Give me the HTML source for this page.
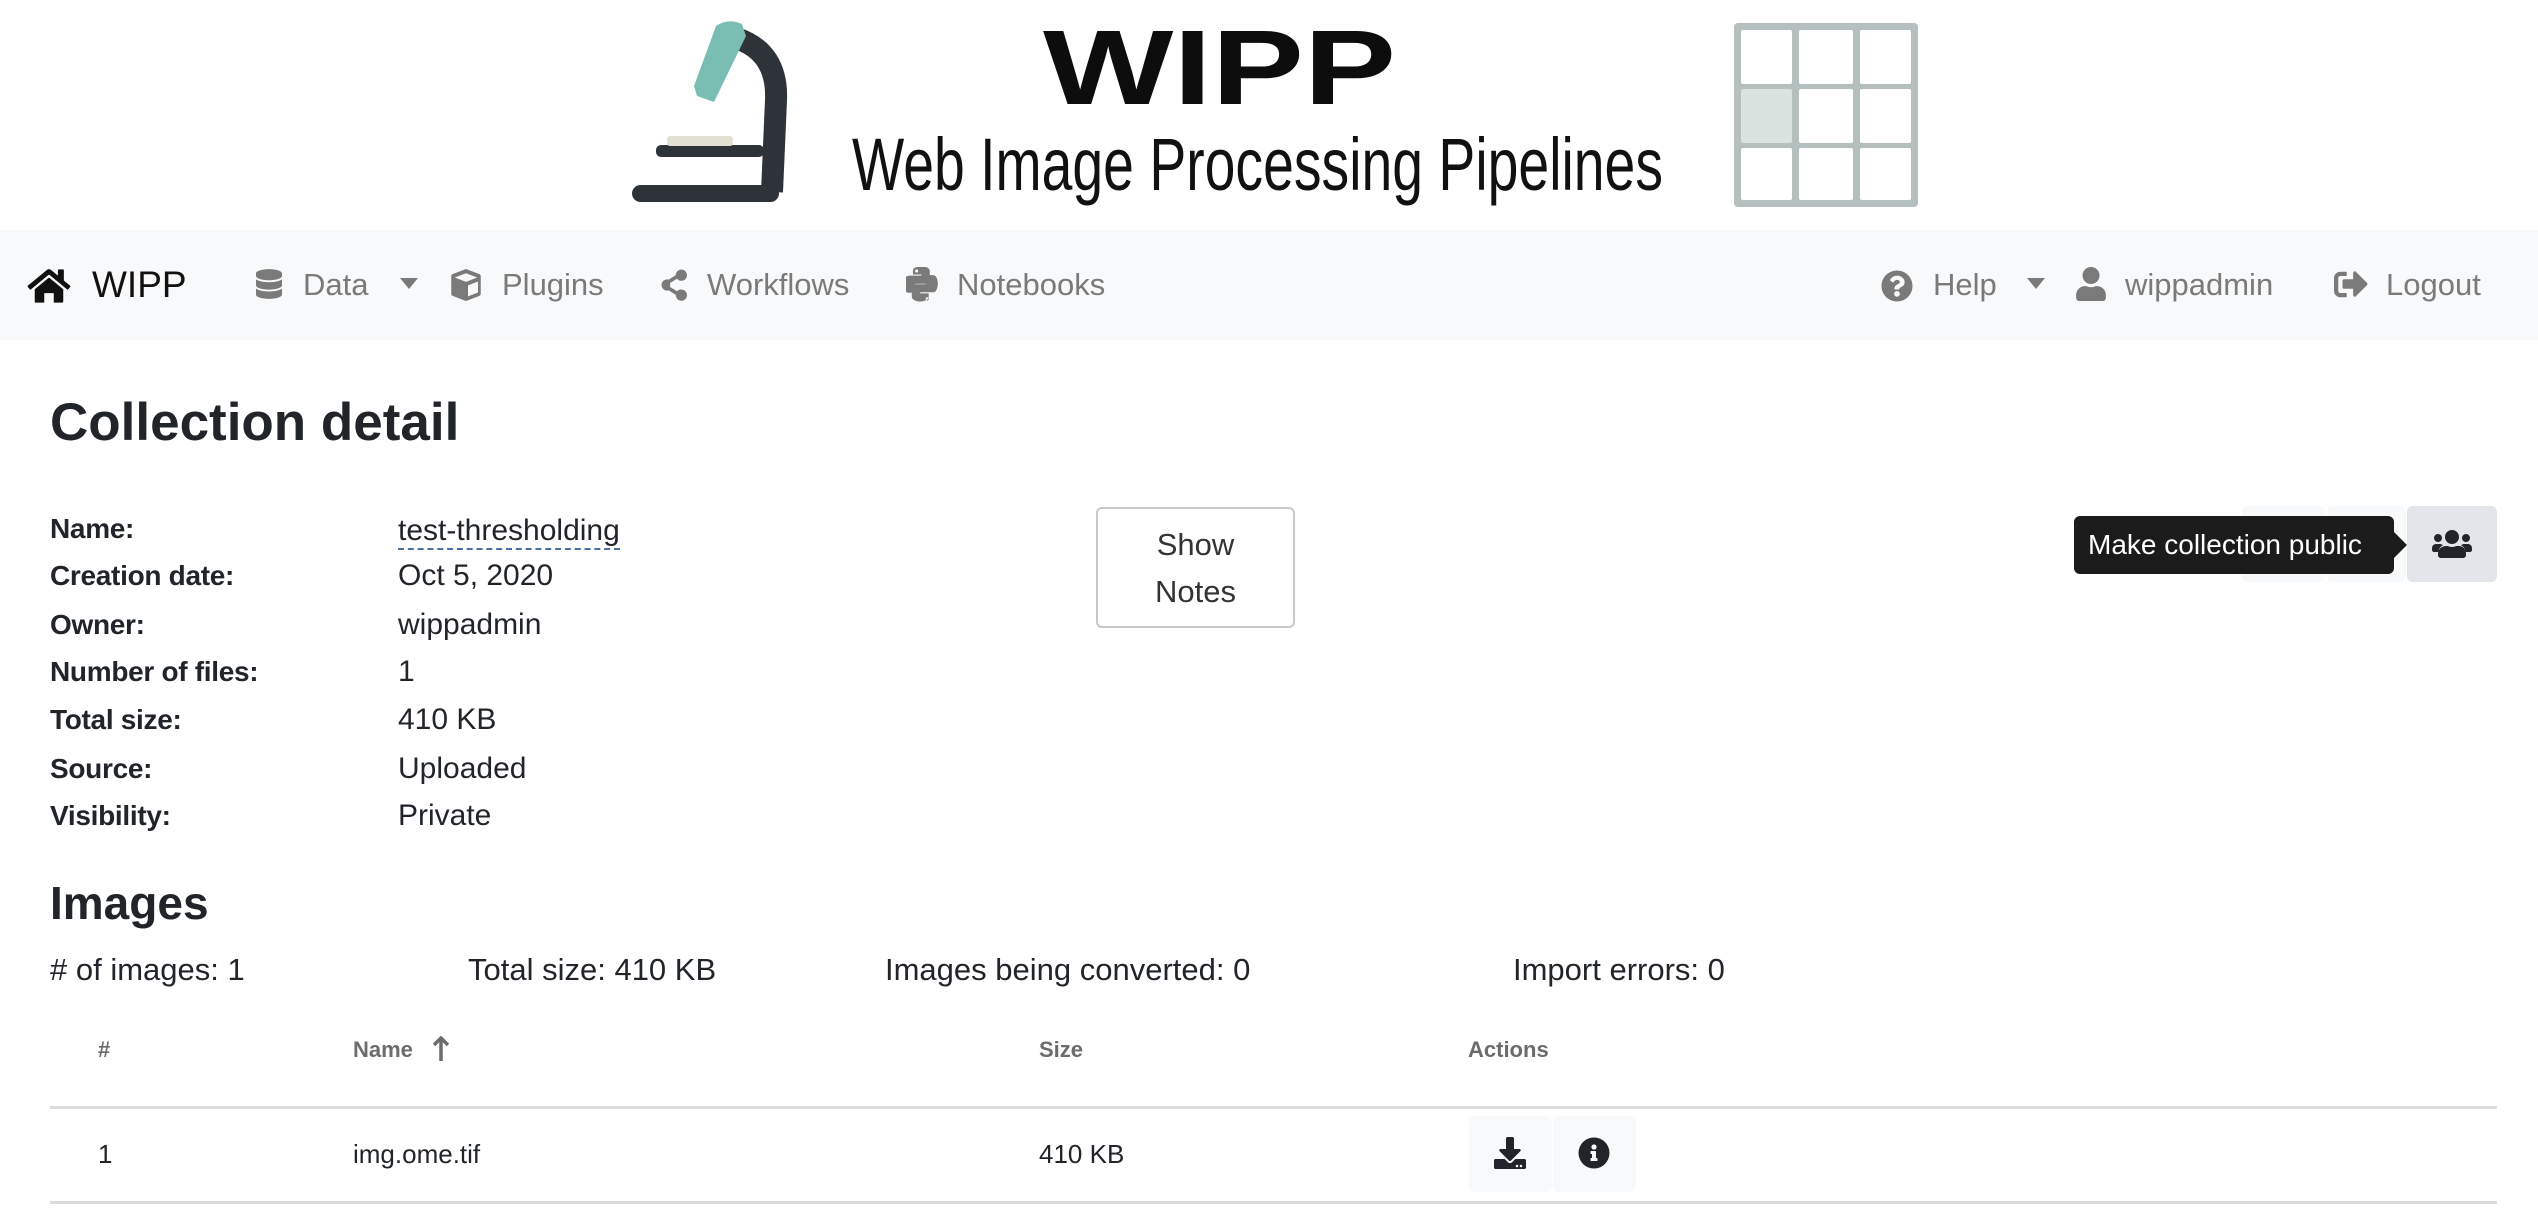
<!DOCTYPE html>
<html><head><meta charset="utf-8"><style>
*{margin:0;padding:0;box-sizing:border-box}
body{width:2538px;height:1222px;overflow:hidden;background:#fff;font-family:"Liberation Sans",Arial,sans-serif;color:#212529;position:relative}
.a{position:absolute;white-space:nowrap}
.nav{position:absolute;left:0;top:230px;width:2538px;height:110px;background:#f8f9fa}
.nl{position:absolute;top:0;line-height:110px;font-size:31px;color:#7a7a7a}
.lbl{font-weight:bold;font-size:28px;line-height:48px;left:50px;letter-spacing:-0.3px}
.val{font-size:30px;line-height:48px;left:398px}
.st{font-size:31px;line-height:40px;top:950px}
.th{font-size:22px;font-weight:bold;color:#6c6c6c;top:1030px;line-height:40px}
.td{font-size:26px;top:1134px;line-height:40px}
.btn{position:absolute;background:#f8f9fa;border-radius:6px}
</style></head><body>

<!-- Logo -->
<svg class="a" style="left:620px;top:15px" width="170" height="195" viewBox="620 15 170 195">
  <rect x="632" y="185" width="147" height="17" rx="8.5" fill="#2d3339"/>
  <path d="M736 38 Q778 52 776 100 L772 192" stroke="#2d3339" stroke-width="22" fill="none"/>
  <rect x="656" y="145" width="108" height="12" rx="5" fill="#2d3339"/>
  <rect x="667" y="136" width="66" height="10" rx="3" fill="#e2dfd3"/>
  <path d="M716 26 Q728 18 742 24 L746 36 L714 102 L697 96 L694 86 Z" fill="#79bdb3"/>
</svg>
<svg class="a" style="left:1030px;top:0" width="400" height="120" viewBox="1030 0 400 120">
  <text x="1043" y="104" font-family="Liberation Sans" font-weight="bold" font-size="118" textLength="353" lengthAdjust="spacingAndGlyphs" fill="#0d0d0d" transform="translate(0,10.4) scale(1,0.9) translate(0,0)">WIPP</text>
</svg>
<svg class="a" style="left:840px;top:120px" width="840" height="90" viewBox="840 120 840 90">
  <text x="852" y="190" font-family="Liberation Sans" font-size="74" textLength="811" lengthAdjust="spacingAndGlyphs" fill="#111">Web Image Processing Pipelines</text>
</svg>
<svg class="a" style="left:1734px;top:23px" width="184" height="184" viewBox="0 0 184 184">
  <rect x="0" y="0" width="184" height="184" rx="4" fill="#b5bfbd"/>
  <g fill="#fff">
    <rect x="7" y="7" width="51" height="54" rx="2"/><rect x="65" y="7" width="54" height="54" rx="2"/><rect x="126" y="7" width="51" height="54" rx="2"/>
    <rect x="7" y="66" width="51" height="54" rx="2" fill="#d9e2df"/><rect x="65" y="66" width="54" height="54" rx="2"/><rect x="126" y="66" width="51" height="54" rx="2"/>
    <rect x="7" y="125" width="51" height="52" rx="2"/><rect x="65" y="125" width="54" height="52" rx="2"/><rect x="126" y="125" width="51" height="52" rx="2"/>
  </g>
</svg>

<!-- Nav -->
<div class="nav">
  <svg class="a" style="left:26px;top:37px" width="46" height="38" viewBox="0 0 576 512"><path fill="#111" d="M280 148L96 300v164a16 16 0 0 0 16 16h112V352h128v128h112a16 16 0 0 0 16-16V300L296 148a12 12 0 0 0-16 0zM571 251L488 182V44a12 12 0 0 0-12-12h-56a12 12 0 0 0-12 12v72L318 42a48 48 0 0 0-61 0L4 251a12 12 0 0 0-2 17l26 31a12 12 0 0 0 17 2L280 107a12 12 0 0 1 16 0l235 194a12 12 0 0 0 17-2l26-31a12 12 0 0 0-2-17z"/></svg>
  <div class="nl" style="left:92px;color:#111;font-size:37px">WIPP</div>
  <svg class="a" style="left:256px;top:37px" width="26" height="34" viewBox="0 0 448 512"><path fill="#7a7a7a" d="M448 73v46C448 159 348 192 224 192S0 159 0 119V73C0 33 100 0 224 0s224 33 224 73zm0 103v103c0 40-100 73-224 73S0 319 0 279V176c48 33 136 49 224 49s176-16 224-49zm0 160v103c0 40-100 73-224 73S0 479 0 439V336c48 33 136 49 224 49s176-16 224-49z"/></svg>
  <div class="nl" style="left:303px">Data</div>
  <svg class="a" style="left:400px;top:48px" width="18" height="12" viewBox="0 0 18 12"><path d="M0 0h18L9 11z" fill="#7a7a7a"/></svg>
  <svg class="a" style="left:450px;top:37px" width="32" height="36" viewBox="0 0 512 512"><path fill="#7a7a7a" d="M239 6L41 82a32 32 0 0 0-21 30v288a32 32 0 0 0 21 30l198 76a48 48 0 0 0 34 0l198-76a32 32 0 0 0 21-30V112a32 32 0 0 0-21-30L273 6a48 48 0 0 0-34 0zM256 68l180 68-180 70-180-70zm32 370V262l160-62v176z"/></svg>
  <div class="nl" style="left:502px">Plugins</div>
  <svg class="a" style="left:656px;top:37px" width="32" height="36" viewBox="0 0 448 512"><path fill="#7a7a7a" d="M352 320c-23 0-43 10-57 25l-100-63a96 96 0 0 0 0-52l100-63a80 80 0 1 0-18-51l-100 63a80 80 0 1 0 0 154l100 63A80 80 0 1 0 352 320z"/></svg>
  <div class="nl" style="left:707px">Workflows</div>
  <svg class="a" style="left:906px;top:37px" width="32" height="36" viewBox="0 0 448 512"><path fill="#7a7a7a" d="M440 177c-9-35-26-61-61-61h-45v53c0 41-35 76-75 76H139c-33 0-60 28-60 61v114c0 33 28 52 60 61 38 11 76 13 120 0 30-9 60-26 60-61v-45H199v-16h181c35 0 48-24 60-61 12-39 12-76 0-121zM298 431a22 22 0 1 1 0 44 22 22 0 0 1 0-44zM155 238h120c33 0 60-28 60-61V62c0-33-28-57-60-62-41-7-85-6-120 0-51 9-60 28-60 62v45h120v15H49c-35 0-66 21-75 61-11 46-11 75 0 123 9 36 29 61 64 61h41v-55c0-40 34-74 76-74zm-7-160a22 22 0 1 1 0-44 22 22 0 0 1 0 44z"/></svg>
  <div class="nl" style="left:957px">Notebooks</div>

  <svg class="a" style="left:1881px;top:40px" width="32" height="32" viewBox="0 0 512 512"><path fill="#7a7a7a" d="M504 256c0 137-111 248-248 248S8 393 8 256 119 8 256 8s248 111 248 248zM263 90c-55 0-89 23-116 64a12 12 0 0 0 3 16l34 26a12 12 0 0 0 17-2c18-23 30-36 57-36 20 0 45 13 45 33 0 15-13 23-33 34-24 13-55 30-55 71v4a12 12 0 0 0 12 12h56a12 12 0 0 0 12-12v-1c0-28 83-29 83-106 0-58-60-103-116-103zm-7 246a46 46 0 1 0 0 92 46 46 0 0 0 0-92z"/></svg>
  <div class="nl" style="left:1933px">Help</div>
  <svg class="a" style="left:2027px;top:48px" width="18" height="12" viewBox="0 0 18 12"><path d="M0 0h18L9 11z" fill="#7a7a7a"/></svg>
  <svg class="a" style="left:2076px;top:37px" width="30" height="34" viewBox="0 0 448 512"><path fill="#7a7a7a" d="M224 256a128 128 0 1 0 0-256 128 128 0 0 0 0 256zm90 32h-17a174 174 0 0 1-146 0h-17C60 288 0 348 0 422v42a48 48 0 0 0 48 48h352a48 48 0 0 0 48-48v-42c0-74-60-134-134-134z"/></svg>
  <div class="nl" style="left:2125px">wippadmin</div>
  <svg class="a" style="left:2334px;top:39px" width="34" height="30" viewBox="0 0 512 448"><path fill="#7a7a7a" d="M497 241L329 409c-15 15-41 4-41-17v-96H152c-13 0-24-11-24-24v-96c0-13 11-24 24-24h136V56c0-21 26-32 41-17l168 168c9 9 9 25 0 34zM192 412v-40c0-7-5-12-12-12H96c-18 0-32-14-32-32V136c0-18 14-32 32-32h84c7 0 12-5 12-12V52c0-7-5-12-12-12H96C43 40 0 83 0 136v192c0 53 43 96 96 96h84c7 0 12-5 12-12z"/></svg>
  <div class="nl" style="left:2386px">Logout</div>
</div>

<!-- Collection detail -->
<div class="a" style="left:50px;top:390px;font-size:53px;font-weight:bold;line-height:66px">Collection detail</div>

<div class="a lbl" style="top:505px">Name:</div>
<div class="a lbl" style="top:552px">Creation date:</div>
<div class="a lbl" style="top:601px">Owner:</div>
<div class="a lbl" style="top:648px">Number of files:</div>
<div class="a lbl" style="top:696px">Total size:</div>
<div class="a lbl" style="top:745px">Source:</div>
<div class="a lbl" style="top:792px">Visibility:</div>

<div class="a val" style="top:505px;border-bottom:2px dashed #4a6fa5;line-height:40px;padding-top:6px;height:45px">test-thresholding</div>
<div class="a val" style="top:552px">Oct 5, 2020</div>
<div class="a val" style="top:601px">wippadmin</div>
<div class="a val" style="top:648px">1</div>
<div class="a val" style="top:696px">410 KB</div>
<div class="a val" style="top:745px">Uploaded</div>
<div class="a val" style="top:792px">Private</div>

<div class="a" style="left:1096px;top:507px;width:199px;height:121px;border:2px solid #c8c8c8;border-radius:6px;text-align:center;font-size:31px;line-height:47px;padding-top:12px;color:#333">Show<br>Notes</div>

<div class="btn" style="left:2242px;top:506px;width:83px;height:76px"></div>
<div class="btn" style="left:2327px;top:506px;width:79px;height:76px"></div>
<div class="btn" style="left:2407px;top:506px;width:90px;height:76px;background:#e2e6ea"></div>
<svg class="a" style="left:2432px;top:528px" width="40" height="32" viewBox="0 0 640 512"><path fill="#212529" d="M96 224a64 64 0 1 0 0-128 64 64 0 0 0 0 128zm448 0a64 64 0 1 0 0-128 64 64 0 0 0 0 128zm32 32h-64c-18 0-34 7-45 19 40 22 69 62 75 109h66c18 0 32-14 32-32v-32c0-35-29-64-64-64zm-256 0a112 112 0 1 0 0-224 112 112 0 0 0 0 224zm77 32h-8c-21 10-44 16-69 16s-48-6-69-16h-8C147 288 96 339 96 403v29c0 27 21 48 48 48h352c27 0 48-21 48-48v-29c0-64-51-115-115-115zm-224-13c-11-12-27-19-45-19H64c-35 0-64 29-64 64v32c0 18 14 32 32 32h66c6-47 35-87 75-109z"/></svg>
<div class="a" style="left:2074px;top:516px;width:320px;height:58px;background:#1b1b1b;border-radius:6px;color:#fff;font-size:28px;line-height:58px;padding-left:14px">Make collection public</div>
<svg class="a" style="left:2393px;top:531px" width="15" height="28" viewBox="0 0 15 28"><path d="M0 0L14 14L0 28Z" fill="#1b1b1b"/></svg>

<!-- Images -->
<div class="a" style="left:50px;top:875px;font-size:46px;font-weight:bold;line-height:56px">Images</div>
<div class="a st" style="left:50px">#&nbsp;of images: 1</div>
<div class="a st" style="left:468px">Total size: 410 KB</div>
<div class="a st" style="left:885px">Images being converted: 0</div>
<div class="a st" style="left:1513px">Import errors: 0</div>

<div class="a th" style="left:98px">#</div>
<div class="a th" style="left:353px">Name</div>
<svg class="a" style="left:432px;top:1036px" width="18" height="26" viewBox="0 0 18 26"><path d="M9 2V25M2 9L9 2L16 9" stroke="#6c6c6c" stroke-width="3.5" fill="none"/></svg>
<div class="a th" style="left:1039px">Size</div>
<div class="a th" style="left:1468px">Actions</div>
<div class="a" style="left:50px;top:1106px;width:2447px;height:3px;background:#dcdcdc"></div>
<div class="a td" style="left:98px">1</div>
<div class="a td" style="left:353px">img.ome.tif</div>
<div class="a td" style="left:1039px">410 KB</div>
<div class="btn" style="left:1469px;top:1116px;width:83px;height:76px"></div>
<div class="btn" style="left:1553px;top:1116px;width:83px;height:76px"></div>
<svg class="a" style="left:1494px;top:1136px" width="32" height="34" viewBox="0 0 512 512"><path fill="#212529" d="M216 0h80c13 0 24 11 24 24v168h88c18 0 27 21 14 34L270 380c-8 8-20 8-28 0L90 226c-13-13-4-34 14-34h88V24c0-13 11-24 24-24zm296 376v112c0 13-11 24-24 24H24c-13 0-24-11-24-24V376c0-13 11-24 24-24h147l49 49c20 20 52 20 72 0l49-49h147c13 0 24 11 24 24zm-124 88a20 20 0 1 0-40 0 20 20 0 0 0 40 0zm64 0a20 20 0 1 0-40 0 20 20 0 0 0 40 0z"/></svg>
<svg class="a" style="left:1578px;top:1137px" width="32" height="32" viewBox="0 0 512 512"><path fill="#212529" d="M256 8a248 248 0 1 0 0 496 248 248 0 0 0 0-496zm0 110a42 42 0 1 1 0 84 42 42 0 0 1 0-84zm56 254c0 7-5 12-12 12h-88c-7 0-12-5-12-12v-24c0-7 5-12 12-12h12v-64h-12c-7 0-12-5-12-12v-24c0-7 5-12 12-12h64c7 0 12 5 12 12v100h12c7 0 12 5 12 12v24z"/></svg>
<div class="a" style="left:50px;top:1201px;width:2447px;height:3px;background:#dcdcdc"></div>
</body></html>
